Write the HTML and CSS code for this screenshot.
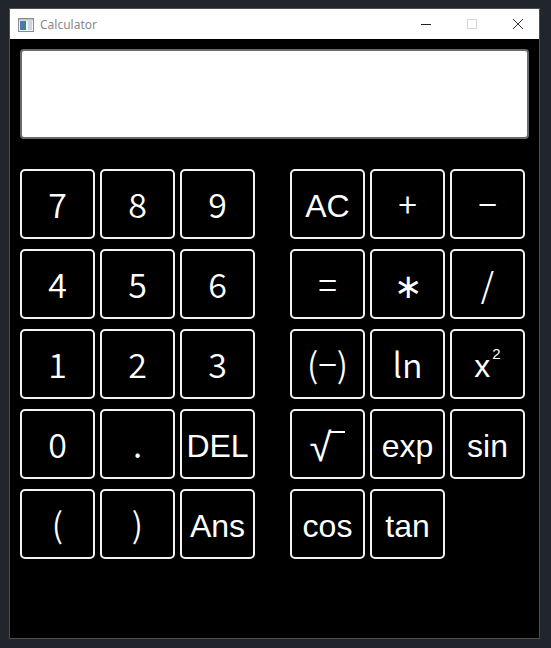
FILE: index.html
```html
<!DOCTYPE html>
<html>
<head>
<meta charset="utf-8">
<link rel="stylesheet" href="styles.css">
</head>
<body>
<div class="window">
  <div class="titlebar">
    <svg class="app-icon" width="16" height="14" viewBox="0 0 16 14">
      <rect x="0.5" y="0.5" width="15" height="13" fill="#f4f4f4" stroke="#8a8a8a"/>
      <rect x="2" y="3" width="6" height="9" fill="#3d8a6e"/>
      <rect x="2" y="3" width="3" height="9" fill="#4a78b8"/>
      <rect x="10" y="3" width="4" height="9" fill="#c9d6e0"/>
      <rect x="1" y="1" width="14" height="1.5" fill="#b9c4cf"/>
    </svg>
    <span class="title">Calculator</span>
    <div class="controls">
      <svg class="ctl" width="46" height="30" viewBox="0 0 46 30"><line x1="18" y1="15.5" x2="28" y2="15.5" stroke="#222" stroke-width="1"/></svg>
      <svg class="ctl" width="46" height="30" viewBox="0 0 46 30"><rect x="18.5" y="10.5" width="9" height="9" fill="none" stroke="#d6d6d6" stroke-width="1"/></svg>
      <svg class="ctl last" width="46" height="30" viewBox="0 0 46 30"><path d="M18 10 L28 20 M28 10 L18 20" stroke="#333" stroke-width="1"/></svg>
    </div>
  </div>
  <div class="content">
    <div class="display"></div>
    <div class="pad">
      <div class="grid">
        <div class="key jp">7</div>
        <div class="key jp">8</div>
        <div class="key jp">9</div>
        <div class="key jp">4</div>
        <div class="key jp">5</div>
        <div class="key jp">6</div>
        <div class="key jp">1</div>
        <div class="key jp">2</div>
        <div class="key jp">3</div>
        <div class="key jp">0</div>
        <div class="key jp">.</div>
        <div class="key">DEL</div>
        <div class="key jp">(</div>
        <div class="key jp">)</div>
        <div class="key">Ans</div>
      </div>
      <div class="grid">
        <div class="key">AC</div>
        <div class="key jp">+</div>
        <div class="key jp">−</div>
        <div class="key jp">=</div>
        <div class="key jp bold">∗</div>
        <div class="key jp">/</div>
        <div class="key jp">(−)</div>
        <div class="key jp">ln</div>
        <div class="key">x<sup class="sq">2</sup></div>
        <div class="key"><span class="root">√</span><span class="bar"></span></div>
        <div class="key">exp</div>
        <div class="key">sin</div>
        <div class="key">cos</div>
        <div class="key">tan</div>
      </div>
    </div>
  </div>
</div>
</body>
</html>
```

FILE: styles.css
```css
html, body {
  margin: 0;
  padding: 0;
}
body {
  background: #21252c;
  width: 551px;
  height: 648px;
  overflow: hidden;
}
.window {
  margin: 8px 0 0 9px;
  width: 529px;
  height: 629px;
  border: 1px solid #4d4d4d;
  display: flex;
  flex-direction: column;
}
.titlebar {
  height: 30px;
  background: #ffffff;
  display: flex;
  align-items: center;
  flex: none;
}
.app-icon {
  margin-left: 8px;
  margin-top: 1px;
}
.title {
  margin-left: 6px;
  font-family: "Noto Sans", "DejaVu Sans", sans-serif;
  font-size: 12px;
  color: #8a8a8a;
}
.controls {
  margin-left: auto;
  display: flex;
  margin-right: -2px;
}
.ctl {
  display: block;
}
.content {
  flex: 1;
  background: #000;
  padding: 10px 10px 0 10px;
}
.display {
  height: 86px;
  background: #fff;
  border: 2px solid #6a6a6a;
  border-radius: 4px;
}
.pad {
  margin-top: 30px;
  display: flex;
  gap: 35px;
}
.grid {
  display: grid;
  grid-template-columns: repeat(3, 75px);
  grid-auto-rows: 70px;
  column-gap: 5px;
  row-gap: 10px;
}
.key {
  box-sizing: border-box;
  border: 2px solid #f2f2f2;
  border-radius: 5px;
  background: #000;
  color: #fff;
  display: flex;
  align-items: center;
  justify-content: center;
  font-family: "Liberation Sans", Arial, sans-serif;
  font-size: 32px;
  line-height: 1;
  padding-top: 3px;
  overflow: hidden;
  white-space: nowrap;
}
.jp {
  font-family: "Noto Sans CJK JP", "Liberation Sans", sans-serif;
  font-weight: 350;
  font-size: 34px;
  padding-top: 0;
}
.jp.bold {
  font-weight: 500;
}
.sq {
  font-size: 15px;
  vertical-align: 0;
  position: relative;
  top: -12px;
  margin-left: 2px;
}
.root {
  font-family: "Liberation Sans", sans-serif;
  font-size: 40px;
  margin-top: 2px;
}
.bar {
  width: 16px;
  height: 2px;
  background: #fff;
  align-self: flex-start;
  margin-top: 17px;
  margin-left: -2px;
}
```
